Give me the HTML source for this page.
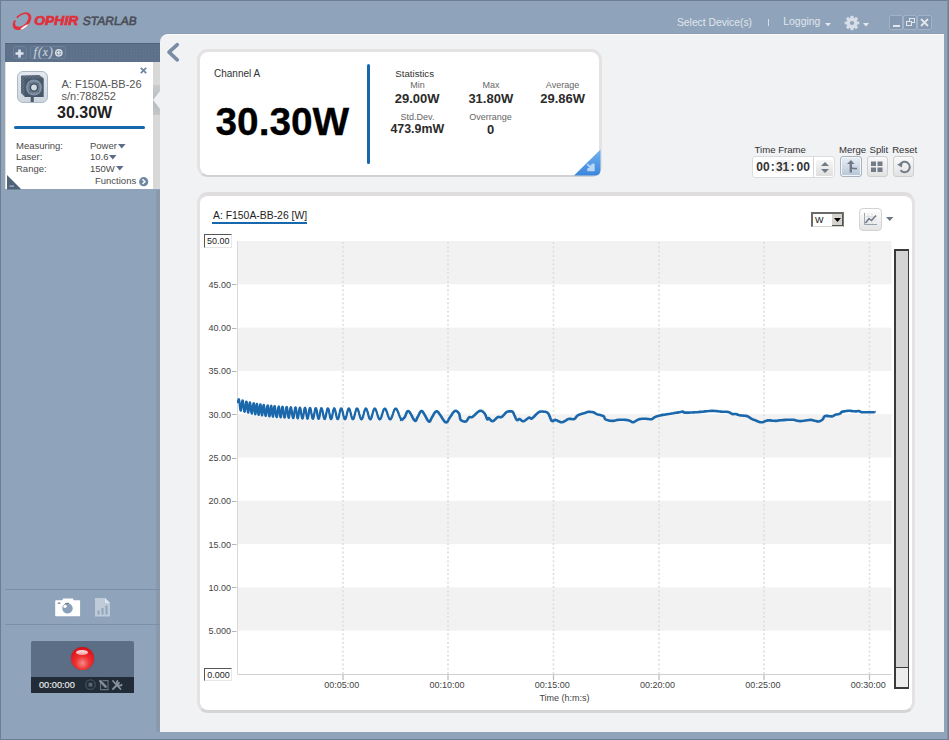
<!DOCTYPE html>
<html><head><meta charset="utf-8">
<style>
*{box-sizing:border-box;margin:0;padding:0}
html,body{width:949px;height:740px;overflow:hidden;background:#8fa3bb;font-family:"Liberation Sans",sans-serif;position:relative}
.a{position:absolute}
.t{position:absolute;line-height:1;white-space:nowrap}
.c{transform:translateX(-50%)}
.yl{font-size:9px;color:#444;width:40px;left:191.1px;text-align:right}
.xl{font-size:9px;color:#444;transform:translateX(-50%);top:681.2px}
.lbl{font-size:9.5px;color:#444}
.val{font-size:13px;font-weight:bold;color:#2b2b2b}
.sl{font-size:9px;color:#666}
.tf{top:160.8px;font-size:12px;font-weight:bold;color:#333}
</style></head><body>
<!-- window borders -->
<div class="a" style="left:0;top:0;width:949px;height:1px;background:#6d7e94"></div>
<div class="a" style="left:0;top:0;width:1px;height:740px;background:#6d7e94"></div>
<div class="a" style="left:947px;top:0;width:1px;height:740px;background:#7f91a7"></div><div class="a" style="left:948px;top:0;width:1px;height:740px;background:#6d7e94"></div>
<div class="a" style="left:0;top:739px;width:949px;height:1px;background:#6d7e94"></div>

<!-- logo -->
<svg class="a" style="left:10px;top:9px" width="25" height="24" viewBox="0 0 25 24">
 <defs>
  <clipPath id="lgc"><path d="M-5,-5 H30 V30 H-5z M12,12.2 L-8,-1.6 L-1.5,10.7z" clip-rule="evenodd"/></clipPath>
  <clipPath id="ring"><path transform="rotate(-42 12 12.2)" fill-rule="evenodd" clip-rule="evenodd" d="M1.2,12.2 A10.8,7 0 1,0 22.8,12.2 A10.8,7 0 1,0 1.2,12.2z M4.45,11.5 A7.9,4.7 0 1,0 20.25,11.5 A7.9,4.7 0 1,0 4.45,11.5z"/></clipPath>
  <filter id="lgb" x="-50%" y="-50%" width="200%" height="200%"><feGaussianBlur stdDeviation="0.7"/></filter>
 </defs>
 <g clip-path="url(#lgc)"><g clip-path="url(#ring)">
  <rect x="0" y="0" width="25" height="24" fill="#e2303c"/>
  <ellipse cx="15" cy="18.8" rx="5" ry="2" transform="rotate(-32 15 18.8)" fill="#ffffff" filter="url(#lgb)"/>
 </g></g>
</svg>
<div class="t" style="left:34px;top:15.2px;font-size:12px;font-weight:bold;font-style:italic;color:#e0303b;transform:scaleX(1.16);transform-origin:0 0;-webkit-text-stroke:0.7px #e0303b">OPHIR</div>
<div class="t" style="left:82.5px;top:15.2px;font-size:12px;color:#4a4e56;transform:skewX(-9deg);-webkit-text-stroke:0.6px #4a4e56">STARLAB</div>

<!-- header right -->
<div class="t" style="left:677px;top:17.6px;font-size:10.3px;color:#e0e6ed">Select Device(s)</div>
<div class="a" style="left:767.5px;top:18.5px;width:1px;height:7px;background:#d5dde6"></div>
<div class="t" style="left:783.3px;top:16.6px;font-size:10.4px;color:#e0e6ed">Logging</div>
<svg class="a" style="left:824.5px;top:23px" width="6" height="4"><path d="M0,0 L6,0 L3,3.2z" fill="#e4e9ef"/></svg>
<svg class="a" style="left:844px;top:15px" width="16" height="16" viewBox="0 0 16 16">
 <g transform="translate(8 8)" fill="#d7dee7">
  <circle r="5.3"/>
  <rect x="-1.6" y="-7.3" width="3.2" height="14.6" rx="0.8"/>
  <rect x="-1.6" y="-7.3" width="3.2" height="14.6" rx="0.8" transform="rotate(45)"/>
  <rect x="-1.6" y="-7.3" width="3.2" height="14.6" rx="0.8" transform="rotate(90)"/>
  <rect x="-1.6" y="-7.3" width="3.2" height="14.6" rx="0.8" transform="rotate(135)"/>
  <circle r="2.1" fill="#8fa3bb"/>
 </g>
</svg>
<svg class="a" style="left:862.5px;top:23px" width="6" height="4"><path d="M0,0 L6,0 L3,3.5z" fill="#e4e9ef"/></svg>
<!-- window buttons -->
<div class="a" style="left:889px;top:15px;width:14px;height:15px;background:#8498b1;border:1px solid #a3b3c6;border-radius:2px"></div>
<div class="a" style="left:903px;top:15px;width:14px;height:15px;background:#8498b1;border:1px solid #a3b3c6;border-radius:2px"></div>
<div class="a" style="left:917px;top:15px;width:15px;height:15px;background:#8498b1;border:1px solid #a3b3c6;border-radius:2px"></div>
<div class="a" style="left:892.5px;top:25px;width:7px;height:2px;background:#e2e6ea"></div>
<svg class="a" style="left:906px;top:18px" width="9" height="9"><rect x="3.5" y="0.5" width="5" height="4" fill="none" stroke="#e2e6ea"/><rect x="0.5" y="3.5" width="5" height="4" fill="#8498b1" stroke="#e2e6ea"/></svg>
<svg class="a" style="left:920px;top:18px" width="9" height="9"><path d="M1,1 L8,8 M8,1 L1,8" stroke="#e2e6ea" stroke-width="1.8"/></svg>

<!-- main content panel -->
<div class="a" style="left:160px;top:34px;width:784px;height:698px;background:#f1f2f4;border-top:1px solid #f8f9f9;border-top-left-radius:8px;box-shadow:0 -1px 0 #8a9db4"></div>
<svg class="a" style="left:165px;top:41px" width="18" height="24"><path d="M12.3,3.6 L4,11.2 L12.3,18.8" fill="none" stroke="#7a8ca4" stroke-width="3.6" stroke-linecap="round" stroke-linejoin="round"/></svg>

<!-- sidebar toolbar -->
<div class="a" style="left:5px;top:43px;width:155px;height:19px;background:repeating-conic-gradient(#5c6f88 0 25%,#61748d 0 50%) 0 0/3px 3px;border-top:1px solid #52647b"></div>
<div class="a" style="left:12.5px;top:46px;width:14px;height:12.5px;border:1px solid #6e829b;border-radius:2.5px;background:#5f738d"></div>
<svg class="a" style="left:15px;top:48.5px" width="9" height="9"><path d="M4.5,0.5 V8.5 M0.5,4.5 H8.5" stroke="#dce3ea" stroke-width="2.6"/></svg>
<div class="a" style="left:30px;top:46px;width:35.5px;height:12.5px;border:1px solid #6e829b;border-radius:2.5px;background:#5f738d"></div>
<div class="t" style="left:33.8px;top:47px;font-size:11.5px;font-family:'Liberation Serif',serif;font-style:italic;color:#c9d2dc;letter-spacing:1px;-webkit-text-stroke:0.2px #c9d2dc">f(x)</div>
<svg class="a" style="left:55px;top:48.8px" width="8" height="8"><circle cx="3.8" cy="3.8" r="3.1" fill="none" stroke="#d6dde5" stroke-width="1.5"/><path d="M3.8,1.8 V5.8 M1.8,3.8 H5.8" stroke="#d6dde5" stroke-width="1.5"/></svg>

<!-- device card -->
<div class="a" style="left:5px;top:62px;width:148px;height:127px;background:#fff;border-left:1px solid #e6dfd2"></div>
<div class="a" style="left:153px;top:62px;width:7px;height:127px;background:#d8d8d8"></div>
<svg class="a" style="left:153px;top:85px" width="7" height="30">
 <defs><linearGradient id="ng1" x1="0" y1="0" x2="0" y2="1"><stop offset="0" stop-color="#c9cbcd"/><stop offset="1" stop-color="#b9bcbf"/></linearGradient>
 <linearGradient id="ng2" x1="0" y1="0" x2="0" y2="1"><stop offset="0" stop-color="#b5b8bc"/><stop offset="1" stop-color="#c5c7c9"/></linearGradient></defs>
 <rect x="0" y="0" width="7" height="15" fill="url(#ng1)"/><rect x="0" y="15" width="7" height="15" fill="url(#ng2)"/>
 <path d="M7,6 L0,15 L7,24z" fill="#eef0f2"/>
</svg>
<div class="a" style="left:156px;top:190px;width:4px;height:542px;background:#8a9aac"></div>

<!-- sensor icon -->
<div class="a" style="left:16.5px;top:71px;width:31px;height:31.5px;border-radius:6px;background:linear-gradient(#e4e9ef,#cdd6e0);border:1px solid #adb9c6"></div>
<svg class="a" style="left:20px;top:74px" width="25" height="28" viewBox="0 0 25 28">
 <defs><pattern id="hatch" width="2.2" height="2.2" patternUnits="userSpaceOnUse" patternTransform="rotate(45)"><rect width="2.2" height="2.2" fill="#4a5a6c"/><rect width="1" height="2.2" fill="#6a7a8c"/></pattern></defs>
 <path d="M1,1.5 L19,1 L23.5,4 L23.5,23 L5,23 L1,19z" fill="url(#hatch)"/>
 <path d="M4.5,4.5 L23.5,4.5 L23.5,23 L5,23 L4.5,22z" fill="#485869"/>
 <circle cx="14" cy="13.5" r="8" fill="#8494a7"/>
 <circle cx="14" cy="13.5" r="6.2" fill="#6d7e92"/>
 <circle cx="9.8" cy="9.3" r="0.6" fill="#3f4d5e"/><circle cx="18.2" cy="9.3" r="0.6" fill="#3f4d5e"/><circle cx="9.8" cy="17.7" r="0.6" fill="#3f4d5e"/><circle cx="18.2" cy="17.7" r="0.6" fill="#3f4d5e"/>
 <circle cx="14" cy="13.5" r="4.3" fill="#3f4d5e"/>
 <circle cx="14" cy="13.5" r="2.9" fill="#d3dbe4"/>
 <rect x="10.7" y="23" width="3.1" height="5" fill="#4b5b6e"/>
</svg>
<svg class="a" style="left:140px;top:67px" width="7" height="7"><path d="M0.8,0.8 L6.2,6.2 M6.2,0.8 L0.8,6.2" stroke="#6d87a5" stroke-width="1.8"/></svg>
<div class="t" style="left:61.5px;top:79px;font-size:11px;color:#555">A: F150A-BB-26</div>
<div class="t" style="left:61.5px;top:91.4px;font-size:11px;color:#555">s/n:788252</div>
<div class="t c" style="left:84.6px;top:104.5px;font-size:16px;font-weight:bold;color:#222">30.30W</div>
<div class="a" style="left:14px;top:126px;width:131px;height:3px;background:#1767ad;border-radius:1.5px"></div>
<div class="t" style="left:16px;top:141.4px;font-size:9.5px;color:#4a4a4a">Measuring:</div>
<div class="t" style="left:16px;top:152.4px;font-size:9.5px;color:#4a4a4a">Laser:</div>
<div class="t" style="left:16px;top:163.6px;font-size:9.5px;color:#4a4a4a">Range:</div>
<div class="t" style="left:90px;top:141.4px;font-size:9.5px;color:#4a4a4a">Power</div>
<div class="t" style="left:90px;top:152.4px;font-size:9.5px;color:#4a4a4a">10.6</div>
<div class="t" style="left:90px;top:163.6px;font-size:9.5px;color:#4a4a4a">150W</div>
<svg class="a" style="left:117.5px;top:144px" width="8" height="5"><path d="M0,0 L7.5,0 L3.75,4.5z" fill="#5a6d85"/></svg>
<svg class="a" style="left:108.5px;top:155px" width="8" height="5"><path d="M0,0 L7.5,0 L3.75,4.5z" fill="#5a6d85"/></svg>
<svg class="a" style="left:116px;top:166px" width="8" height="5"><path d="M0,0 L7.5,0 L3.75,4.5z" fill="#5a6d85"/></svg>
<div class="t" style="left:95px;top:176.4px;font-size:9.5px;color:#4a4a4a">Functions</div>
<svg class="a" style="left:138.5px;top:177px" width="10" height="10"><circle cx="4.7" cy="4.7" r="4.6" fill="#6f87a3"/><path d="M3.5,2.3 L5.9,4.7 L3.5,7.1" stroke="#fff" stroke-width="1.4" fill="none"/></svg>
<svg class="a" style="left:6.5px;top:175px" width="15" height="15"><path d="M0,0 L14.5,14.5 L0,14.5z" fill="#4e627b"/><rect x="2.5" y="10.5" width="4.5" height="1.3" fill="#a9b7c7"/></svg>

<!-- sidebar bottom -->
<div class="a" style="left:5px;top:589px;width:155px;height:1px;background:#7b8fa8"></div>
<div class="a" style="left:5px;top:624px;width:155px;height:1px;background:#7b8fa8"></div>
<svg class="a" style="left:55px;top:598px" width="26" height="19" viewBox="0 0 26 19">
 <path d="M1.2,2.2 H7.3 L8.2,0.6 H17.8 L18.7,2.2 H24.4 Q25.1,2.2 25.1,3 V17.6 Q25.1,18.3 24.4,18.3 H0.9 Q0.2,18.3 0.2,17.6 V3 Q0.2,2.2 1.2,2.2z" fill="#ffffff"/>
 <rect x="2.5" y="4.5" width="3.2" height="1.2" rx="0.6" fill="#6f7f92"/>
 <circle cx="12.5" cy="10.4" r="5.2" fill="#8aa0b8"/>
 <path d="M8,9 A5.2,5.2 0 0,1 14,5.4" stroke="#5c6d80" stroke-width="1" fill="none"/>
 <circle cx="10" cy="8.2" r="1.7" fill="#ffffff"/>
</svg>
<svg class="a" style="left:95px;top:598px" width="16" height="19" viewBox="0 0 16 19">
 <path d="M0,0 L10,0 L15,5 L15,18.5 L0,18.5z" fill="#bfcbd8"/>
 <path d="M10,0 L10,5 L15,5" fill="#dfe6ee"/>
 <rect x="2.5" y="12.5" width="2" height="4" fill="#8fa3bb"/><rect x="6.5" y="10" width="2" height="6.5" fill="#8fa3bb"/><rect x="10.5" y="7.5" width="2" height="9" fill="#8fa3bb"/>
</svg>
<div class="a" style="left:31px;top:640.5px;width:103px;height:36.5px;background:#5b6e86;border-radius:2px 2px 0 0"></div>
<div class="a" style="left:31px;top:677px;width:103px;height:16px;background:#222c37"></div>
<div class="a" style="left:70.5px;top:647px;width:23px;height:23px;border-radius:50%;background:radial-gradient(circle at 50% 70%,#f58a8a 0,#ee3030 35%,#e0141c 70%,#b50d12 100%);box-shadow:0 0 1px #3d4a5a"></div>
<div class="a" style="left:76px;top:650px;width:12px;height:5px;border-radius:50%;background:linear-gradient(#ffffff,#f7a5a5);opacity:0.9"></div>
<div class="t" style="left:39px;top:680.8px;font-size:9.2px;color:#ededed;-webkit-text-stroke:0.15px #ededed">00:00:00</div>
<svg class="a" style="left:80px;top:675px" width="50" height="20" viewBox="0 0 50 20">
 <circle cx="10.5" cy="9.7" r="4.8" fill="none" stroke="#3f4d5c" stroke-width="1.4"/><rect x="8.6" y="7.8" width="3.8" height="3.8" fill="#5a6877"/>
 <path d="M20.5,8 V14.6 H28 V5.6 H22.5" fill="none" stroke="#66737f" stroke-width="1.1"/>
 <path d="M20.3,6.2 L25.6,11.6" stroke="#808d9b" stroke-width="2.6" stroke-linecap="round"/>
 <path d="M33,6 L40.5,14" stroke="#8793a0" stroke-width="1.8" stroke-linecap="round"/>
 <path d="M33,14 L39,7.8" stroke="#8793a0" stroke-width="1.8" stroke-linecap="round"/>
 <path d="M38,5.5 A2.8,2.8 0 1,0 42,9.2" fill="none" stroke="#8793a0" stroke-width="1.8"/>
</svg>


<!-- channel card -->
<div class="a" style="left:196.5px;top:49px;width:405.5px;height:127.5px;background:#fff;border:3.5px solid #e4e2e3;border-bottom:2.5px solid #d2d1d2;border-radius:11px"></div>
<svg class="a" style="left:573px;top:149px" width="29" height="28">
 <defs><linearGradient id="cg" x1="0" y1="0" x2="0" y2="1"><stop offset="0" stop-color="#72b2f2"/><stop offset="1" stop-color="#3b85db"/></linearGradient></defs>
 <path d="M27.5,0.5 V21 Q27.5,26.5 22,26.5 H1z" fill="url(#cg)"/>
 <path d="M14.5,14.5 L17.5,16.8 L19,14.6 L21.7,14.7 L21.7,22.2 L14.3,22.2 L14.3,19.6 L16.6,18.4 L13.8,16z" fill="#b9d6f4"/>
</svg>
<div class="t" style="left:214px;top:68.5px;font-size:10px;color:#333">Channel A</div>
<div class="t" style="left:215.5px;top:103.2px;font-size:38.8px;font-weight:bold;color:#000;-webkit-text-stroke:0.3px #000">30.30W</div>
<div class="a" style="left:367px;top:64px;width:3px;height:100px;background:#1767ad;border-radius:1.5px"></div>
<div class="t" style="left:395.3px;top:69px;font-size:9.7px;color:#333">Statistics</div>
<div class="t sl c" style="left:417.5px;top:80.9px">Min</div>
<div class="t val c" style="left:417.2px;top:92px">29.00W</div>
<div class="t sl c" style="left:491px;top:80.9px">Max</div>
<div class="t val c" style="left:490.8px;top:92px">31.80W</div>
<div class="t sl c" style="left:562.5px;top:80.9px">Average</div>
<div class="t val c" style="left:562.7px;top:92px">29.86W</div>
<div class="t sl c" style="left:417.5px;top:112.5px">Std.Dev.</div>
<div class="t val c" style="left:417.3px;top:122.9px;font-size:12.4px">473.9mW</div>
<div class="t sl c" style="left:490.4px;top:112.5px">Overrange</div>
<div class="t val c" style="left:490.7px;top:122.6px">0</div>

<!-- time frame -->
<div class="t" style="left:754.5px;top:145.2px;font-size:9.6px;color:#333">Time Frame</div>
<div class="t" style="left:839px;top:145.2px;font-size:9.6px;color:#333">Merge</div>
<div class="t" style="left:869.5px;top:145.2px;font-size:9.6px;color:#333">Split</div>
<div class="t" style="left:892.2px;top:145.2px;font-size:9.6px;color:#333">Reset</div>
<div class="a" style="left:752px;top:155.5px;width:83px;height:22.5px;background:#fff;border:1px solid #dcdcdc;border-radius:3px"></div>
<div class="a" style="left:813px;top:156.5px;width:1px;height:20.5px;background:#d6d6d6"></div>
<div class="a" style="left:775px;top:160px;width:16px;height:12.5px;background:#f2f2f2"></div>
<div class="t tf" style="left:756.3px">00</div>
<div class="t tf" style="left:770.7px">:</div>
<div class="t tf" style="left:775.9px">31</div>
<div class="t tf" style="left:790.6px">:</div>
<div class="t tf" style="left:796.5px">00</div>
<div class="a" style="left:816px;top:159.5px;width:17px;height:16px;background:linear-gradient(#f6f6f6,#dedede);border-radius:1px"></div>
<svg class="a" style="left:820px;top:161px" width="10" height="13"><path d="M1,5 L5,1 L9,5z M1,8 L9,8 L5,12z" fill="#707b88"/></svg>
<div class="a" style="left:840px;top:156px;width:22px;height:20.5px;border:1px solid #aab3bd;border-radius:3px;background:linear-gradient(#eaeff4,#b5c6d6);box-shadow:inset 0 0 0 1px #f4f7fa"></div>
<svg class="a" style="left:840px;top:156px" width="22" height="21"><path d="M11,4 L7,8 L14.5,8z" fill="#6f7986"/><rect x="9.6" y="7.5" width="2.4" height="9" fill="#6f7986"/><path d="M11.5,12 Q13,12.6 17,12.6" stroke="#6f7986" stroke-width="1.8" fill="none"/></svg>
<div class="a" style="left:866.5px;top:156px;width:21.5px;height:20.5px;border:1px solid #cfcfcf;border-radius:3px;background:linear-gradient(#fafafa,#e2e2e2)"></div>
<svg class="a" style="left:870px;top:159.5px" width="14" height="14"><rect x="1" y="1.5" width="5" height="4.5" fill="#737d88"/><rect x="7.5" y="1.5" width="5" height="4.5" fill="#737d88"/><rect x="1" y="7.5" width="5" height="4.5" fill="#737d88"/><rect x="7.5" y="7.5" width="5" height="4.5" fill="#737d88"/></svg>
<div class="a" style="left:892.5px;top:156px;width:21.5px;height:20.5px;border:1px solid #cfcfcf;border-radius:3px;background:linear-gradient(#fafafa,#e2e2e2)"></div>
<svg class="a" style="left:895px;top:158px" width="17" height="17"><path d="M5.2,6.2 A5.2,5.2 0 1,1 5.5,12.2" stroke="#737d88" stroke-width="2" fill="none"/><path d="M2,6.5 L7.8,4.2 L6.8,9.5z" fill="#737d88"/></svg>


<!-- chart card -->
<div class="a" style="left:196.5px;top:192px;width:718.5px;height:521px;background:#fff;border-style:solid;border-color:#dfdddd #e4e2e3 #d6d5d6 #e4e2e3;border-width:4px 3.5px 3px 3.5px;border-radius:11px"></div>
<div class="t" style="left:213px;top:211.3px;font-size:10.4px;color:#222">A: F150A-BB-26 [W]</div>
<div class="a" style="left:212px;top:222px;width:95px;height:2px;background:#1767ad"></div>

<svg class="a" style="left:0;top:0" width="949" height="740">
<rect x="237.5" y="241.00" width="654.0" height="43.30" fill="#f2f2f2"/>
<rect x="237.5" y="327.60" width="654.0" height="43.30" fill="#f2f2f2"/>
<rect x="237.5" y="414.20" width="654.0" height="43.30" fill="#f2f2f2"/>
<rect x="237.5" y="500.80" width="654.0" height="43.30" fill="#f2f2f2"/>
<rect x="237.5" y="587.40" width="654.0" height="43.30" fill="#f2f2f2"/>
<line x1="343.0" y1="242.0" x2="343.0" y2="674.0" stroke="#dedede" stroke-width="1.6" stroke-dasharray="2,2.3"/>
<line x1="343.0" y1="674.0" x2="343.0" y2="680.0" stroke="#bdbdbd" stroke-width="1.3"/>
<line x1="448.0" y1="242.0" x2="448.0" y2="674.0" stroke="#dedede" stroke-width="1.6" stroke-dasharray="2,2.3"/>
<line x1="448.0" y1="674.0" x2="448.0" y2="680.0" stroke="#bdbdbd" stroke-width="1.3"/>
<line x1="553.5" y1="242.0" x2="553.5" y2="674.0" stroke="#dedede" stroke-width="1.6" stroke-dasharray="2,2.3"/>
<line x1="553.5" y1="674.0" x2="553.5" y2="680.0" stroke="#bdbdbd" stroke-width="1.3"/>
<line x1="659.0" y1="242.0" x2="659.0" y2="674.0" stroke="#dedede" stroke-width="1.6" stroke-dasharray="2,2.3"/>
<line x1="659.0" y1="674.0" x2="659.0" y2="680.0" stroke="#bdbdbd" stroke-width="1.3"/>
<line x1="764.0" y1="242.0" x2="764.0" y2="674.0" stroke="#dedede" stroke-width="1.6" stroke-dasharray="2,2.3"/>
<line x1="764.0" y1="674.0" x2="764.0" y2="680.0" stroke="#bdbdbd" stroke-width="1.3"/>
<line x1="869.5" y1="242.0" x2="869.5" y2="674.0" stroke="#dedede" stroke-width="1.6" stroke-dasharray="2,2.3"/>
<line x1="869.5" y1="674.0" x2="869.5" y2="680.0" stroke="#bdbdbd" stroke-width="1.3"/>
<line x1="237.5" y1="241.0" x2="237.5" y2="674.0" stroke="#d8d8d8" stroke-width="1"/>
<line x1="237.5" y1="674.5" x2="891.5" y2="674.5" stroke="#d0d0d0" stroke-width="1"/>
<line x1="232" y1="284.5" x2="236.5" y2="284.5" stroke="#b5b5b5" stroke-width="1"/>
<line x1="232" y1="328.5" x2="236.5" y2="328.5" stroke="#b5b5b5" stroke-width="1"/>
<line x1="232" y1="371.5" x2="236.5" y2="371.5" stroke="#b5b5b5" stroke-width="1"/>
<line x1="232" y1="414.5" x2="236.5" y2="414.5" stroke="#b5b5b5" stroke-width="1"/>
<line x1="232" y1="458.5" x2="236.5" y2="458.5" stroke="#b5b5b5" stroke-width="1"/>
<line x1="232" y1="501.5" x2="236.5" y2="501.5" stroke="#b5b5b5" stroke-width="1"/>
<line x1="232" y1="544.5" x2="236.5" y2="544.5" stroke="#b5b5b5" stroke-width="1"/>
<line x1="232" y1="587.5" x2="236.5" y2="587.5" stroke="#b5b5b5" stroke-width="1"/>
<line x1="232" y1="631.5" x2="236.5" y2="631.5" stroke="#b5b5b5" stroke-width="1"/>
<path d="M238.0,403.2 L238.2,401.2 L238.5,399.8 L238.8,399.2 L239.0,399.5 L239.2,400.8 L239.5,402.7 L239.8,404.9 L240.0,407.2 L240.2,409.0 L240.5,410.3 L240.8,410.6 L241.0,410.1 L241.2,408.7 L241.5,406.8 L241.8,404.7 L242.0,402.7 L242.2,401.2 L242.5,400.5 L242.8,400.6 L243.0,401.7 L243.2,403.4 L243.5,405.6 L243.8,407.9 L244.0,409.9 L244.2,411.2 L244.5,411.8 L244.8,411.4 L245.0,410.2 L245.2,408.3 L245.5,406.2 L245.8,404.2 L246.0,402.5 L246.2,401.6 L246.5,401.6 L246.8,402.6 L247.0,404.5 L247.2,406.9 L247.5,409.3 L247.8,411.3 L248.0,412.5 L248.2,412.7 L248.5,411.8 L248.8,410.0 L249.0,407.8 L249.2,405.5 L249.5,403.6 L249.8,402.5 L250.0,402.5 L250.2,403.3 L250.5,404.9 L250.8,407.1 L251.0,409.3 L251.2,411.4 L251.5,412.9 L251.8,413.6 L252.0,413.3 L252.2,412.3 L252.5,410.5 L252.8,408.4 L253.0,406.3 L253.2,404.5 L253.5,403.4 L253.8,403.2 L254.0,404.1 L254.2,406.1 L254.5,408.7 L254.8,411.3 L255.0,413.3 L255.2,414.3 L255.5,413.9 L255.8,412.4 L256.0,410.1 L256.2,407.5 L256.5,405.3 L256.8,404.0 L257.0,403.9 L257.2,404.9 L257.5,406.7 L257.8,409.1 L258.0,411.5 L258.2,413.5 L258.5,414.7 L258.8,414.8 L259.0,413.9 L259.2,412.1 L259.5,409.9 L259.8,407.5 L260.0,405.6 L260.2,404.5 L260.5,404.5 L260.8,405.6 L261.0,407.6 L261.2,410.2 L261.5,412.6 L261.8,414.5 L262.0,415.4 L262.2,415.1 L262.5,413.6 L262.8,411.4 L263.0,408.9 L263.2,406.7 L263.5,405.2 L263.8,404.9 L264.0,405.5 L264.2,406.8 L264.5,408.7 L264.8,410.8 L265.0,412.9 L265.2,414.6 L265.5,415.6 L265.8,415.9 L266.0,415.4 L266.2,414.1 L266.5,412.3 L266.8,410.2 L267.0,408.2 L267.2,406.6 L267.5,405.6 L267.8,405.4 L268.0,406.2 L268.2,407.9 L268.5,410.1 L268.8,412.6 L269.0,414.7 L269.2,416.0 L269.5,416.4 L269.8,415.6 L270.0,414.0 L270.2,411.8 L270.5,409.4 L270.8,407.4 L271.0,406.1 L271.2,405.8 L271.5,406.6 L271.8,408.4 L272.0,410.7 L272.2,413.2 L272.5,415.3 L272.8,416.5 L273.0,416.7 L273.2,415.7 L273.5,413.8 L273.8,411.4 L274.0,409.0 L274.2,407.2 L274.5,406.2 L274.8,406.2 L275.0,407.1 L275.2,408.5 L275.5,410.4 L275.8,412.4 L276.0,414.3 L276.2,415.9 L276.5,416.8 L276.8,417.1 L277.0,416.6 L277.2,415.4 L277.5,413.7 L277.8,411.8 L278.0,409.8 L278.2,408.1 L278.5,407.0 L278.8,406.5 L279.0,406.8 L279.2,408.0 L279.5,409.9 L279.8,412.2 L280.0,414.4 L280.2,416.2 L280.5,417.2 L280.8,417.3 L281.0,416.5 L281.2,414.9 L281.5,412.7 L281.8,410.5 L282.0,408.5 L282.2,407.2 L282.5,406.7 L282.8,407.1 L283.0,408.2 L283.2,409.8 L283.5,411.8 L283.8,413.8 L284.0,415.6 L284.2,416.9 L284.5,417.6 L284.8,417.5 L285.0,416.8 L285.2,415.4 L285.5,413.5 L285.8,411.5 L286.0,409.7 L286.2,408.2 L286.5,407.2 L286.8,407.0 L287.0,407.6 L287.2,408.8 L287.5,410.6 L287.8,412.7 L288.0,414.7 L288.2,416.4 L288.5,417.5 L288.8,417.9 L289.0,417.5 L289.2,416.4 L289.5,414.8 L289.8,412.8 L290.0,410.8 L290.2,409.0 L290.5,407.8 L290.8,407.2 L291.0,407.4 L291.2,408.2 L291.5,409.5 L291.8,411.1 L292.0,412.9 L292.2,414.6 L292.5,416.2 L292.8,417.4 L293.0,418.0 L293.2,418.1 L293.5,417.6 L293.8,416.5 L294.0,415.1 L294.2,413.3 L294.5,411.6 L294.8,409.9 L295.0,408.6 L295.2,407.7 L295.5,407.4 L295.8,407.8 L296.0,408.8 L296.2,410.3 L296.5,412.1 L296.8,414.0 L297.0,415.8 L297.2,417.2 L297.5,418.1 L297.8,418.3 L298.0,417.9 L298.2,416.8 L298.5,415.2 L298.8,413.4 L299.0,411.5 L299.2,409.8 L299.5,408.5 L299.8,407.7 L300.0,407.7 L300.2,408.1 L300.5,409.1 L300.8,410.4 L301.0,411.9 L301.2,413.6 L301.5,415.2 L301.8,416.6 L302.0,417.7 L302.2,418.3 L302.5,418.5 L302.8,418.2 L303.0,417.3 L303.2,416.1 L303.5,414.6 L303.8,413.0 L304.0,411.4 L304.2,409.9 L304.5,408.8 L304.8,408.0 L305.0,407.8 L305.2,408.1 L305.5,408.8 L305.8,410.0 L306.0,411.5 L306.2,413.2 L306.5,414.9 L306.8,416.4 L307.0,417.6 L307.2,418.4 L307.5,418.7 L307.8,418.4 L308.0,417.6 L308.2,416.5 L308.5,415.0 L308.8,413.3 L309.0,411.6 L309.2,410.1 L309.5,408.9 L309.8,408.2 L310.0,407.9 L310.2,408.1 L310.5,408.7 L310.8,409.6 L311.0,410.8 L311.2,412.2 L311.5,413.7 L311.8,415.1 L312.0,416.4 L312.2,417.5 L312.5,418.3 L312.8,418.7 L313.0,418.8 L313.2,418.4 L313.5,417.7 L313.8,416.7 L314.0,415.4 L314.2,414.0 L314.5,412.6 L314.8,411.2 L315.0,409.9 L315.2,409.0 L315.5,408.3 L315.8,408.1 L316.0,408.2 L316.2,408.7 L316.5,409.7 L316.8,410.9 L317.0,412.3 L317.2,413.8 L317.5,415.3 L317.8,416.6 L318.0,417.7 L318.2,418.5 L318.5,418.9 L318.8,418.8 L319.0,418.4 L319.2,417.5 L319.5,416.4 L319.8,415.0 L320.0,413.5 L320.2,412.0 L320.5,410.7 L320.8,409.5 L321.0,408.7 L321.2,408.2 L321.5,408.2 L321.8,408.5 L322.0,409.1 L322.2,409.9 L322.5,411.0 L322.8,412.2 L323.0,413.5 L323.2,414.8 L323.5,416.0 L323.8,417.1 L324.0,418.0 L324.2,418.6 L324.5,418.9 L324.8,419.0 L325.0,418.7 L325.2,418.1 L325.5,417.3 L325.8,416.2 L326.0,415.0 L326.2,413.8 L326.5,412.5 L326.8,411.2 L327.0,410.2 L327.2,409.3 L327.5,408.6 L327.8,408.3 L328.0,408.3 L328.2,408.6 L328.5,409.2 L328.8,410.1 L329.0,411.2 L329.2,412.5 L329.5,413.8 L329.8,415.1 L330.0,416.4 L330.2,417.5 L330.5,418.3 L330.8,418.8 L331.0,419.1 L331.2,419.0 L331.5,418.6 L331.8,417.8 L332.0,416.9 L332.2,415.7 L332.5,414.4 L332.8,413.0 L333.0,411.7 L333.2,410.6 L333.5,409.6 L333.8,408.9 L334.0,408.4 L334.2,408.3 L334.5,408.5 L334.8,409.0 L335.0,409.7 L335.2,410.6 L335.5,411.6 L335.8,412.8 L336.0,414.0 L336.2,415.2 L336.5,416.3 L336.8,417.3 L337.0,418.1 L337.2,418.7 L337.5,419.1 L337.8,419.2 L338.0,419.0 L338.2,418.5 L338.5,417.8 L338.8,416.9 L339.0,415.9 L339.2,414.7 L339.5,413.5 L339.8,412.3 L340.0,411.2 L340.2,410.2 L340.5,409.4 L340.8,408.8 L341.0,408.5 L341.2,408.4 L341.5,408.6 L341.8,408.9 L342.0,409.5 L342.2,410.3 L342.5,411.2 L342.8,412.3 L343.0,413.4 L343.2,414.5 L343.5,415.6 L343.8,416.6 L344.0,417.5 L344.2,418.2 L344.5,418.8 L344.8,419.1 L345.0,419.2 L345.2,419.1 L345.5,418.8 L345.8,418.2 L346.0,417.5 L346.2,416.6 L346.5,415.6 L346.8,414.5 L347.0,413.4 L347.2,412.3 L347.5,411.3 L347.8,410.3 L348.0,409.6 L348.2,409.0 L348.5,408.6 L348.8,408.4 L349.0,408.5 L349.2,408.8 L349.5,409.2 L349.8,409.8 L350.0,410.6 L350.2,411.5 L350.5,412.4 L350.8,413.4 L351.0,414.5 L351.2,415.5 L351.5,416.4 L351.8,417.3 L352.0,418.0 L352.2,418.6 L352.5,419.0 L352.8,419.2 L353.0,419.2 L353.2,419.1 L353.5,418.7 L353.8,418.2 L354.0,417.5 L354.2,416.6 L354.5,415.7 L354.8,414.7 L355.0,413.7 L355.2,412.6 L355.5,411.7 L355.8,410.8 L356.0,410.0 L356.2,409.3 L356.5,408.9 L356.8,408.6 L357.0,408.5 L357.2,408.6 L357.5,408.8 L357.8,409.2 L358.0,409.8 L358.2,410.5 L358.5,411.2 L358.8,412.1 L359.0,413.0 L359.2,414.0 L359.5,414.9 L359.8,415.8 L360.0,416.7 L360.2,417.5 L360.5,418.1 L360.8,418.7 L361.0,419.0 L361.2,419.2 L361.5,419.3 L361.8,419.2 L362.0,418.9 L362.2,418.5 L362.5,417.9 L362.8,417.2 L363.0,416.4 L363.2,415.5 L363.5,414.6 L363.8,413.6 L364.0,412.7 L364.2,411.8 L364.5,410.9 L364.8,410.2 L365.0,409.6 L365.2,409.1 L365.5,408.7 L365.8,408.5 L366.0,408.5 L366.2,408.7 L366.5,409.0 L366.8,409.5 L367.0,410.1 L367.2,410.8 L367.5,411.7 L367.8,412.6 L368.0,413.5 L368.2,414.5 L368.5,415.4 L368.8,416.3 L369.0,417.2 L369.2,417.9 L369.5,418.5 L369.8,418.9 L370.0,419.2 L370.2,419.3 L370.5,419.3 L370.8,419.1 L371.0,418.7 L371.2,418.1 L371.5,417.5 L371.8,416.7 L372.0,415.8 L372.2,414.9 L372.5,413.9 L372.8,413.0 L373.0,412.0 L373.2,411.2 L373.5,410.4 L373.8,409.7 L374.0,409.2 L374.2,408.8 L374.5,408.6 L374.8,408.5 L375.0,408.6 L375.2,408.9 L375.5,409.2 L375.8,409.7 L376.0,410.2 L376.2,410.9 L376.5,411.6 L376.8,412.4 L377.0,413.2 L377.2,414.0 L377.5,414.9 L377.8,415.7 L378.0,416.4 L378.2,417.2 L378.5,417.8 L378.8,418.3 L379.0,418.8 L379.2,419.1 L379.5,419.3 L379.8,419.3 L380.0,419.3 L380.2,419.1 L380.5,418.8 L380.8,418.3 L381.0,417.8 L381.2,417.2 L381.5,416.5 L381.8,415.7 L382.0,414.9 L382.2,414.0 L382.5,413.2 L382.8,412.4 L383.0,411.6 L383.2,410.9 L383.5,410.2 L383.8,409.7 L384.0,409.2 L384.2,408.9 L384.5,408.7 L384.8,408.6 L385.0,408.6 L385.2,408.7 L385.5,409.0 L385.8,409.4 L386.0,409.8 L386.2,410.4 L386.5,411.0 L386.8,411.7 L387.0,412.4 L387.2,413.2 L387.5,414.0 L387.8,414.7 L388.0,415.5 L388.2,416.2 L388.5,416.9 L388.8,417.6 L389.0,418.1 L389.2,418.6 L389.5,418.9 L389.8,419.2 L390.0,419.3 L390.2,419.4 L390.5,419.3 L390.8,419.1 L391.0,418.8 L391.2,418.4 L391.5,417.9 L391.8,417.3 L392.0,416.7 L392.2,416.0 L392.5,415.2 L392.8,414.4 L393.0,413.7 L393.2,412.9 L393.5,412.1 L393.8,411.4 L394.0,410.7 L394.2,410.2 L394.5,409.6 L394.8,409.2 L395.0,408.9 L395.2,408.7 L395.5,408.6 L395.8,408.6 L396.0,408.7 L396.2,408.8 L396.5,409.1 L396.8,409.4 L397.0,409.8 L397.2,410.3 L397.5,410.8 L397.8,411.4 L398.0,412.0 L398.2,412.6 L398.5,413.2 L398.8,413.9 L399.0,414.6 L399.2,415.2 L399.5,415.9 L399.8,416.5 L400.0,417.1 L400.2,417.6 L400.5,418.0 L400.8,418.5 L401.0,418.8 L401.2,419.1 L401.2,419.2 L401.1,419.5 L401.1,419.8 L401.0,420.1 L401.1,420.2 L401.3,420.2" fill="none" stroke="#1a68ab" stroke-width="2.3" stroke-linejoin="round"/><path d="M401.3,420.2 L401.7,420.0 L402.1,419.7 L402.7,419.2 L403.3,418.7 L404.0,418.0 L404.6,417.3 L405.2,416.3 L405.7,414.9 L406.3,413.4 L406.9,412.0 L407.6,411.2 L408.4,411.0 L409.4,411.8 L410.5,413.5 L411.7,415.7 L412.8,417.9 L413.9,419.7 L414.8,420.7 L415.5,420.9 L416.0,420.5 L416.4,419.8 L416.8,418.8 L417.2,417.8 L417.7,416.9 L418.3,415.8 L418.9,414.5 L419.6,413.1 L420.3,411.8 L421.0,411.1 L421.9,411.0 L422.9,412.0 L424.1,413.8 L425.4,416.1 L426.6,418.5 L427.7,420.4 L428.7,421.5 L429.4,421.7 L430.0,421.3 L430.5,420.4 L430.9,419.4 L431.4,418.3 L432.0,417.3 L432.7,416.2 L433.4,414.8 L434.2,413.4 L435.1,412.2 L436.0,411.4 L437.1,411.4 L438.4,412.4 L439.8,414.4 L441.4,416.8 L442.9,419.2 L444.3,421.2 L445.5,422.3 L446.4,422.5 L447.2,422.0 L447.8,421.1 L448.4,420.0 L449.0,418.8 L449.7,417.7 L450.5,416.6 L451.4,415.3 L452.2,413.9 L453.1,412.6 L454.0,411.6 L454.8,411.0 L455.6,410.8 L456.4,411.0 L457.1,411.4 L457.8,412.0 L458.5,412.8 L459.0,413.5 L459.4,414.4 L459.6,415.5 L459.8,416.7 L460.0,417.9 L460.2,419.0 L460.7,419.8 L461.4,420.4 L462.2,420.9 L463.1,421.3 L464.1,421.5 L465.0,421.6 L465.8,421.5 L466.5,421.1 L467.0,420.4 L467.6,419.5 L468.1,418.6 L468.6,417.8 L469.1,417.3 L469.6,417.1 L470.1,417.1 L470.6,417.2 L471.1,417.3 L471.7,417.2 L472.5,416.9 L473.5,416.1 L474.7,415.0 L476.0,413.7 L477.3,412.5 L478.6,411.5 L479.7,410.9 L480.7,410.8 L481.6,410.9 L482.4,411.3 L483.1,411.9 L483.8,412.6 L484.5,413.3 L485.1,414.2 L485.6,415.3 L486.1,416.6 L486.5,417.8 L486.9,418.8 L487.3,419.4 L487.6,419.5 L487.8,419.3 L488.0,418.9 L488.2,418.4 L488.4,418.0 L488.8,418.0 L489.3,418.4 L489.8,419.0 L490.5,419.8 L491.1,420.6 L491.9,421.1 L492.6,421.3 L493.4,421.0 L494.3,420.3 L495.2,419.4 L496.1,418.5 L497.0,417.6 L497.8,417.1 L498.5,416.9 L499.1,417.0 L499.7,417.1 L500.3,417.3 L500.9,417.3 L501.6,417.1 L502.3,416.5 L503.1,415.7 L503.9,414.8 L504.8,413.8 L505.6,412.9 L506.3,412.3 L507.0,411.9 L507.7,411.6 L508.3,411.5 L508.9,411.4 L509.5,411.4 L510.1,411.4 L510.6,411.4 L511.1,411.3 L511.6,411.3 L512.0,411.4 L512.5,411.7 L513.0,412.3 L513.6,413.3 L514.2,414.7 L514.9,416.2 L515.5,417.7 L516.1,419.0 L516.7,419.9 L517.2,420.2 L517.7,420.1 L518.1,419.8 L518.6,419.4 L519.1,419.1 L519.6,419.0 L520.2,419.3 L520.7,419.8 L521.3,420.3 L522.0,420.9 L522.6,421.2 L523.4,421.3 L524.3,421.0 L525.3,420.3 L526.3,419.5 L527.3,418.7 L528.3,418.0 L529.1,417.6 L529.7,417.6 L530.1,417.8 L530.4,418.2 L530.8,418.6 L531.2,418.7 L531.9,418.5 L532.8,417.8 L533.9,416.8 L535.1,415.5 L536.4,414.2 L537.6,413.1 L538.6,412.3 L539.5,411.8 L540.3,411.6 L541.1,411.5 L541.8,411.5 L542.5,411.5 L543.3,411.6 L544.1,411.7 L544.9,411.8 L545.8,411.9 L546.6,412.2 L547.4,412.6 L548.1,413.3 L548.8,414.3 L549.4,415.7 L550.0,417.3 L550.6,418.8 L551.2,420.1 L551.8,420.9 L552.4,421.2 L553.0,421.1 L553.5,420.7 L554.1,420.3 L554.8,420.0 L555.6,419.9 L556.5,420.2 L557.5,420.7 L558.6,421.2 L559.7,421.8 L560.8,422.2 L561.9,422.3 L563.0,422.0 L564.1,421.5 L565.2,420.8 L566.4,420.1 L567.4,419.4 L568.5,419.0 L569.5,418.9 L570.5,418.9 L571.5,419.0 L572.5,419.2 L573.4,419.2 L574.2,419.0 L574.9,418.6 L575.5,418.0 L576.0,417.2 L576.5,416.5 L577.2,415.8 L578.0,415.2 L579.1,414.7 L580.5,414.2 L581.9,413.8 L583.3,413.4 L584.6,413.1 L585.6,412.8 L586.2,412.5 L586.5,412.3 L586.7,412.2 L586.8,412.0 L587.0,412.0 L587.5,411.9 L588.3,411.9 L589.2,411.9 L590.2,411.9 L591.3,412.0 L592.3,412.1 L593.2,412.3 L593.9,412.5 L594.5,412.8 L595.0,413.2 L595.6,413.5 L596.2,413.9 L597.0,414.2 L598.0,414.5 L599.2,414.8 L600.4,415.1 L601.6,415.4 L602.7,415.7 L603.6,416.1 L604.1,416.6 L604.4,417.2 L604.5,417.8 L604.7,418.4 L605.0,418.9 L605.5,419.4 L606.4,419.8 L607.4,420.1 L608.6,420.4 L609.9,420.7 L611.1,420.8 L612.2,420.9 L613.2,420.9 L614.1,420.7 L615.0,420.5 L615.9,420.3 L616.9,420.0 L617.9,419.9 L619.1,419.8 L620.4,419.8 L621.8,419.8 L623.1,419.8 L624.4,419.8 L625.5,419.9 L626.5,420.0 L627.3,420.1 L628.1,420.3 L628.9,420.5 L629.6,420.7 L630.2,420.9 L630.8,421.2 L631.2,421.5 L631.6,421.8 L632.0,422.1 L632.5,422.3 L633.1,422.3 L633.9,422.0 L634.7,421.6 L635.7,421.0 L636.7,420.4 L637.7,419.8 L638.7,419.4 L639.7,419.1 L640.7,419.0 L641.8,418.8 L642.9,418.8 L643.9,418.7 L645.0,418.7 L646.1,418.7 L647.3,418.9 L648.5,419.0 L649.7,419.2 L650.7,419.2 L651.6,419.2 L652.3,419.0 L652.7,418.7 L653.1,418.4 L653.5,418.0 L653.9,417.6 L654.5,417.3 L655.3,417.0 L656.1,416.6 L657.0,416.3 L658.0,416.0 L659.1,415.7 L660.2,415.4 L661.5,415.1 L662.8,414.9 L664.3,414.7 L665.8,414.4 L667.2,414.2 L668.7,414.0 L670.2,413.8 L671.7,413.5 L673.2,413.3 L674.6,413.0 L676.0,412.8 L677.3,412.6 L678.5,412.4 L679.6,412.2 L680.6,412.0 L681.5,411.8 L682.3,411.6 L683.0,411.6 L683.4,411.7 L683.5,411.8 L683.4,412.1 L683.5,412.3 L683.9,412.5 L684.8,412.6 L686.4,412.6 L688.4,412.6 L690.7,412.5 L693.2,412.4 L695.8,412.2 L698.1,412.1 L700.4,411.9 L702.7,411.7 L705.0,411.4 L707.2,411.2 L709.4,411.0 L711.4,410.9 L713.2,410.9 L714.9,411.0 L716.5,411.1 L718.0,411.3 L719.5,411.5 L720.9,411.6 L722.3,411.7 L723.7,411.7 L725.1,411.8 L726.3,411.8 L727.5,411.9 L728.5,412.1 L729.4,412.4 L730.1,412.7 L730.7,413.1 L731.2,413.5 L731.7,413.8 L732.3,414.0 L732.9,414.1 L733.4,414.1 L734.0,414.0 L734.6,414.0 L735.1,414.0 L735.7,414.0 L736.3,414.1 L736.8,414.3 L737.3,414.5 L737.9,414.8 L738.6,415.0 L739.5,415.2 L740.6,415.4 L741.9,415.5 L743.3,415.6 L744.7,415.7 L746.0,415.9 L747.1,416.1 L747.9,416.4 L748.6,416.8 L749.2,417.2 L749.7,417.7 L750.3,418.1 L750.9,418.5 L751.6,418.8 L752.4,419.2 L753.1,419.5 L753.9,419.8 L754.7,420.1 L755.6,420.4 L756.5,420.8 L757.4,421.2 L758.3,421.6 L759.3,421.9 L760.3,422.2 L761.3,422.3 L762.3,422.2 L763.4,421.9 L764.5,421.4 L765.7,421.0 L766.8,420.6 L768.0,420.4 L769.2,420.4 L770.6,420.4 L771.9,420.6 L773.2,420.7 L774.5,420.8 L775.5,420.9 L776.2,420.9 L776.7,420.8 L777.1,420.7 L777.5,420.6 L778.2,420.5 L779.3,420.4 L780.9,420.3 L782.9,420.1 L785.2,419.9 L787.5,419.8 L789.8,419.7 L791.7,419.7 L793.3,419.8 L794.8,420.1 L796.1,420.4 L797.4,420.7 L798.7,421.0 L800.2,421.1 L801.9,421.0 L803.6,420.8 L805.4,420.5 L807.3,420.2 L809.0,420.0 L810.6,419.9 L812.1,420.0 L813.5,420.4 L814.9,420.8 L816.2,421.1 L817.3,421.4 L818.4,421.5 L819.3,421.4 L820.1,421.1 L820.8,420.8 L821.5,420.3 L822.0,419.9 L822.6,419.4 L823.1,418.9 L823.4,418.2 L823.7,417.5 L824.0,416.9 L824.5,416.4 L825.1,416.0 L826.0,415.9 L827.2,415.9 L828.4,416.1 L829.7,416.3 L830.9,416.4 L831.9,416.4 L832.6,416.2 L833.2,416.0 L833.7,415.7 L834.1,415.4 L834.6,415.1 L835.2,414.8 L836.0,414.6 L836.9,414.4 L837.9,414.2 L838.8,414.0 L839.6,413.7 L840.3,413.5 L840.7,413.2 L840.9,412.9 L841.0,412.6 L841.2,412.3 L841.5,412.0 L842.0,411.8 L842.8,411.6 L843.9,411.4 L845.0,411.2 L846.3,411.0 L847.5,410.9 L848.7,410.8 L849.9,410.8 L851.1,410.9 L852.3,411.1 L853.5,411.2 L854.6,411.3 L855.5,411.4 L856.3,411.4 L856.9,411.3 L857.4,411.2 L857.8,411.1 L858.3,411.0 L858.8,411.0 L859.3,411.1 L859.6,411.3 L860.0,411.6 L860.5,411.8 L861.2,412.1 L862.2,412.2 L863.7,412.3 L865.7,412.3 L867.8,412.3 L870.0,412.3 L871.8,412.3 L873.2,412.2 L874.0,412.1 L874.4,412.0 L874.5,411.8 L874.5,411.6 L874.4,411.5 L874.4,411.4" fill="none" stroke="#1a68ab" stroke-width="2.6" stroke-linejoin="round"/>
</svg>
<div class="t yl" style="top:280.8px">45.00</div>
<div class="t yl" style="top:324.1px">40.00</div>
<div class="t yl" style="top:367.4px">35.00</div>
<div class="t yl" style="top:410.7px">30.00</div>
<div class="t yl" style="top:454.0px">25.00</div>
<div class="t yl" style="top:497.3px">20.00</div>
<div class="t yl" style="top:540.6px">15.00</div>
<div class="t yl" style="top:583.9px">10.00</div>
<div class="t yl" style="top:627.2px">5.000</div>
<div class="t xl" style="left:341.7px">00:05:00</div>
<div class="t xl" style="left:447.0px">00:10:00</div>
<div class="t xl" style="left:552.3px">00:15:00</div>
<div class="t xl" style="left:657.6px">00:20:00</div>
<div class="t xl" style="left:762.9px">00:25:00</div>
<div class="t xl" style="left:868.2px">00:30:00</div>
<div class="t" style="left:564.5px;top:694px;font-size:9px;color:#444;transform:translateX(-50%)">Time (h:m:s)</div>
<div class="a" style="left:203.5px;top:233.5px;width:28px;height:14px;background:#fff;border-top:1.5px solid #555;border-left:1.5px solid #555;border-right:1px solid #e6e6e6;border-bottom:1px solid #e6e6e6"></div>
<div class="t" style="left:207px;top:237.2px;font-size:9px;color:#222">50.00</div>
<div class="a" style="left:203.5px;top:667.5px;width:28px;height:13px;background:#fff;border-top:1.5px solid #555;border-left:1.5px solid #555;border-right:1px solid #e6e6e6;border-bottom:1px solid #e6e6e6"></div>
<div class="t" style="left:207.2px;top:670.8px;font-size:9px;color:#222">0.000</div>
<!-- scrollbar -->
<div class="a" style="left:894px;top:249px;width:15px;height:440px;background:#d4d4d4;border:2px solid #3a3a3a;border-right-width:1.5px"></div>
<div class="a" style="left:896px;top:667px;width:11.5px;height:20px;background:#ececec;border-top:1px solid #3a3a3a"></div>
<!-- chart controls -->
<div class="a" style="left:811px;top:212px;width:32.5px;height:14.5px;background:#fff;border-top:2px solid #6a6a6a;border-left:2px solid #6a6a6a;border-right:1px solid #777;border-bottom:1px solid #d8d4cc"></div>
<div class="a" style="left:831.5px;top:214px;width:11px;height:11.5px;background:#d6d3ce;border-right:1px solid #555;border-bottom:1px solid #555"></div>
<svg class="a" style="left:833.5px;top:217.5px" width="7" height="5"><path d="M0,0 L7,0 L3.5,4z" fill="#000"/></svg>
<div class="t" style="left:815px;top:216.2px;font-size:9px;color:#111">W</div>
<div class="a" style="left:859px;top:208px;width:23px;height:22.5px;border:1px solid #d3d3d3;border-radius:4px;background:linear-gradient(#ffffff,#e4e4e4)"></div>
<svg class="a" style="left:863px;top:212px" width="15" height="14"><path d="M1.5,1 V12.5 H14" stroke="#9aa3ad" stroke-width="1" fill="none"/><path d="M5,1 V12 M9,1 V12 M1.5,4.5 H14 M1.5,8 H14" stroke="#dadde1" stroke-width="0.8"/><path d="M2.5,11 L6,6.5 L8.5,8.5 L13,3.5" stroke="#6f7a87" stroke-width="1.5" fill="none"/></svg>
<svg class="a" style="left:886px;top:217px" width="8" height="5"><path d="M0,0 L7.5,0 L3.75,4z" fill="#6d7785"/></svg>

</body></html>
